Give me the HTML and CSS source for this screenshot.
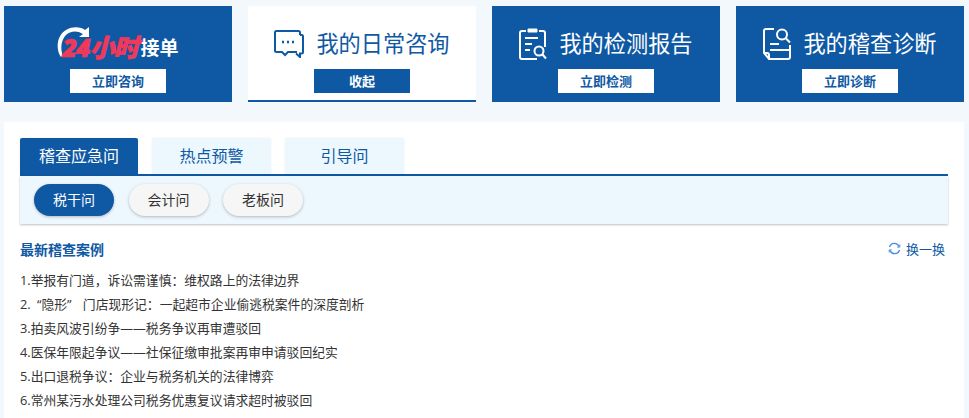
FILE: index.html
```html
<!DOCTYPE html>
<html lang="zh-CN">
<head>
    <meta charset="UTF-8">
    <meta name="viewport" content="width=device-width, initial-scale=1.0">
    <title>我的日常咨询</title>
    <link rel="stylesheet" href="styles.css">
</head>
<body>
    <div class="cards">
        <div class="card">
            <div class="card-head logo">
                <svg class="logo-arc" width="34" height="34" viewBox="0 0 34 34">
                    <path d="M5 31C0 24 0 10 10 4c7-4 15-3 19 0l4-3v10H23l4-3C21 4 14 5 10 9 5 14 4 23 7 30z" fill="#fff"/>
                </svg>
                <span class="logo-red">24小时</span>
                <span class="logo-white">接单</span>
            </div>
            <a class="card-btn">立即咨询</a>
        </div>
        <div class="card active">
            <div class="card-head">
                <svg width="30" height="28" viewBox="0 0 30 28" fill="none" stroke="currentColor" stroke-width="2">
                    <path d="M26 5V2.500A1.500 1.500 0 0 0 24.500 1H2.500A1.500 1.500 0 0 0 1 2.500v18A1.500 1.500 0 0 0 2.500 22H8l3 3 3-3h9"/>
                    <path d="M26 5h2a1.500 1.500 0 0 1 1 1.500V22a1.500 1.500 0 0 1-1.500 1.500H26V27l-4-3.500"/>
                    <path d="M8 12h2M13 12h2M18 12h2" stroke-width="2.500"/>
                </svg>
                <span class="card-title">我的日常咨询</span>
            </div>
            <a class="card-btn">收起</a>
        </div>
        <div class="card">
            <div class="card-head">
                <svg width="28" height="32" viewBox="0 0 28 32" fill="none" stroke="currentColor" stroke-width="2">
                    <path d="M7 3H3a2 2 0 0 0-2 2v24a2 2 0 0 0 2 2h15M20 3h4a2 2 0 0 1 2 2v14"/>
                    <path d="M9 1h9v3H9z" fill="currentColor" stroke-width="1"/>
                    <path d="M6 10h13M6 16h7M6 22h5"/>
                    <circle cx="20" cy="23" r="4.500"/>
                    <path d="M23.500 26.500l3.500 4"/>
                </svg>
                <span class="card-title">我的检测报告</span>
            </div>
            <a class="card-btn">立即检测</a>
        </div>
        <div class="card">
            <div class="card-head">
                <svg width="28" height="32" viewBox="0 0 28 32" fill="none" stroke="currentColor" stroke-width="2">
                    <path d="M11 1H3a2 2 0 0 0-2 2v22l5 6h19a2 2 0 0 0 2-2V17"/>
                    <path d="M1 25h3a2 2 0 0 1 2 2v4"/>
                    <circle cx="19" cy="6.500" r="5"/>
                    <path d="M23 10.500l4 4M7 16h9M7 22h20"/>
                </svg>
                <span class="card-title">我的稽查诊断</span>
            </div>
            <a class="card-btn">立即诊断</a>
        </div>
    </div>

    <div class="panel">
        <div class="tabs">
            <a class="tab on">稽查应急问</a>
            <a class="tab">热点预警</a>
            <a class="tab">引导问</a>
        </div>
        <div class="pills">
            <a class="pill on">税干问</a>
            <a class="pill">会计问</a>
            <a class="pill">老板问</a>
        </div>
        <div class="case-head">
            <span class="case-title">最新稽查案例</span>
            <a class="refresh">
                <svg width="13" height="13" viewBox="0 0 13 13" fill="none" stroke="#4a8ae0" stroke-width="1.300">
                    <path d="M1.500 5A5 5 0 0 1 11 4.500M11.500 8A5 5 0 0 1 2 8.500"/>
                    <path d="M11.800 2.500v2.600H9.200M1.200 10.500V7.900h2.600" stroke-width="1"/>
                </svg>
                换一换
            </a>
        </div>
        <ul class="case-list">
            <li>1.举报有门道，诉讼需谨慎：维权路上的法律边界</li>
            <li>2. <span class="quoted">“隐形”</span> 门店现形记：一起超市企业偷逃税案件的深度剖析</li>
            <li>3.拍卖风波引纷争——税务争议再审遭驳回</li>
            <li>4.医保年限起争议——社保征缴审批案再审申请驳回纪实</li>
            <li>5.出口退税争议：企业与税务机关的法律博弈</li>
            <li>6.常州某污水处理公司税务优惠复议请求超时被驳回</li>
        </ul>
    </div>
</body>
</html>
```

FILE: styles.css
```css
* {
    box-sizing: border-box;
}

body {
    margin: 0;
    padding: 6px 5px 0 4px;
    background-color: #f3f8fc;
    font-family: "Open Sans", "Noto Sans CJK SC", sans-serif;
    color: #333;
    overflow: hidden;
}

a {
    text-decoration: none;
}

.cards {
    display: flex;
    gap: 16px;
}

.card {
    width: 228px;
    height: 96px;
    padding-top: 12px;
    background-color: #0f59a4;
    color: #fff;
    display: flex;
    flex-direction: column;
    align-items: center;
}

.card.active {
    background-color: #fff;
    color: #0f59a4;
    border-bottom: 2px solid #0f59a4;
}

.card-head {
    height: 51px;
    display: flex;
    align-items: center;
    justify-content: center;
    gap: 12px;
}

.card-title {
    font-size: 22.200px;
    line-height: 30px;
}

.card-btn {
    width: 96px;
    height: 24px;
    background-color: #fff;
    color: #0f59a4;
    font-size: 13px;
    font-weight: bold;
    line-height: 24px;
    text-align: center;
}

.card.active .card-btn {
    background-color: #0f59a4;
    color: #fff;
}

.logo {
    position: relative;
    gap: 3px;
    align-items: flex-end;
    padding: 0 0 8px 5px;
}

.logo-arc {
    position: absolute;
    left: -1px;
    top: 8px;
}

.logo-red {
    position: relative;
    color: #f2385a;
    font-size: 25px;
    font-weight: 900;
    font-style: italic;
    line-height: 28px;
    letter-spacing: -1px;
    -webkit-text-stroke: 0.7px #f2385a;
}

.logo-white {
    font-size: 19px;
    font-weight: bold;
    line-height: 26px;
}

.panel {
    margin-top: 20px;
    width: 960px;
    height: 300px;
    padding: 16px;
    background-color: #fff;
}

.tabs {
    display: flex;
    gap: 14px;
    border-bottom: 2px solid #0f59a4;
}

.tab {
    width: 119px;
    height: 36px;
    background-color: #ecf7fe;
    color: #0f59a4;
    font-size: 16px;
    line-height: 37px;
    text-align: center;
    border-radius: 2px 2px 0 0;
    box-shadow: 0 0 2px rgba(0, 0, 0, 0.08);
}

.tab.on {
    width: 118px;
    background-color: #0f59a4;
    color: #fff;
}

.pills {
    height: 48px;
    padding: 8px 14px;
    display: flex;
    gap: 14.500px;
    background-color: #ecf7fe;
    box-shadow: 0 1px 2px rgba(0, 0, 0, 0.25);
}

.pill {
    width: 80px;
    height: 32px;
    border-radius: 16px;
    background-color: #f6f6f6;
    color: #333;
    font-size: 14px;
    line-height: 32px;
    text-align: center;
    box-shadow: 0 1px 3px rgba(0, 0, 0, 0.25);
}

.pill.on {
    background-color: #0f59a4;
    color: #fff;
}

.case-head {
    margin-top: 14px;
    height: 20px;
    display: flex;
    justify-content: space-between;
    align-items: center;
}

.case-title {
    padding-top: 2px;
    color: #0f59a4;
    font-size: 14px;
    font-weight: bold;
}

.refresh {
    display: flex;
    align-items: center;
    gap: 5px;
    padding-right: 3px;
    color: #0f59a4;
    font-size: 13px;
}

.case-list {
    list-style: none;
    margin: 10px 0 0;
    padding: 0;
    color: #333;
    font-size: 12.800px;
    line-height: 24px;
}

.quoted {
    padding: 0 8px 0 3px;
}
```
